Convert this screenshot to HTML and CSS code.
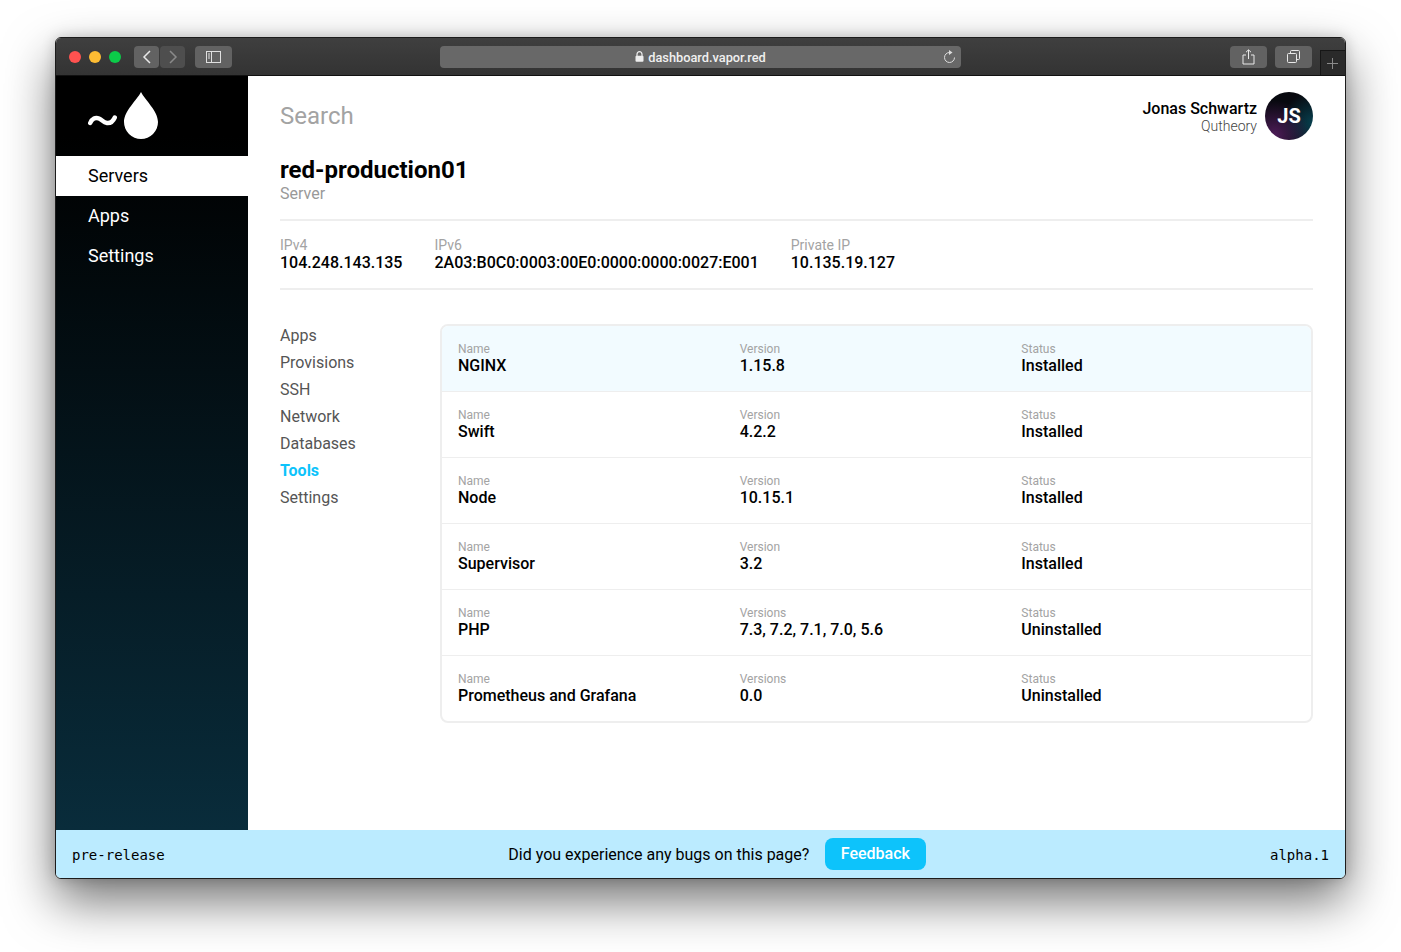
FILE: index.html
```html
<!DOCTYPE html>
<html lang="en">
<head>
    <meta charset="UTF-8">
    <title>dashboard.vapor.red</title>
    <link rel="stylesheet" href="styles.css">
</head>
<body>
    <div class="window">
        <div class="titlebar">
            <div class="lights">
                <span class="light red"></span>
                <span class="light yellow"></span>
                <span class="light green"></span>
            </div>
            <div class="nav-group">
                <div class="tb-btn nav-btn">
                    <svg width="10" height="14" viewBox="0 0 10 14"><path d="M8 1 L2 7 L8 13" fill="none" stroke="#e8e8e8" stroke-width="1.5"/></svg>
                </div>
                <div class="tb-btn nav-btn dim">
                    <svg width="10" height="14" viewBox="0 0 10 14"><path d="M2 1 L8 7 L2 13" fill="none" stroke="#8a8a8a" stroke-width="1.5"/></svg>
                </div>
            </div>
            <div class="tb-btn wide sidebar-btn">
                <svg width="16" height="12" viewBox="0 0 16 12"><rect x="0.5" y="0.5" width="14" height="11" fill="none" stroke="#e0e0e0"/><path d="M5.5 0.5 V11.5 M2 3 H4 M2 5 H4 M2 7 H4" fill="none" stroke="#e0e0e0"/></svg>
            </div>
            <div class="address">
                <svg class="lock" width="9" height="11" viewBox="0 0 9 11"><path d="M2 5 V3.2 a2.5 2.5 0 0 1 5 0 V5" fill="none" stroke="#eee" stroke-width="1.2"/><rect x="0.5" y="4.8" width="8" height="6" rx="1" fill="#eee"/></svg>
                <span class="address-text">dashboard.vapor.red</span>
                <svg class="reload" width="13" height="14" viewBox="0 0 13 14"><path d="M6.5 2.5 A5 5 0 1 0 11.5 7.5" fill="none" stroke="#ddd" stroke-width="1"/><path d="M6 0 L9.5 2.5 L6 5 Z" fill="#ddd"/></svg>
            </div>
            <div class="tb-right">
                <div class="tb-btn wide">
                    <svg width="13" height="16" viewBox="0 0 13 16"><path d="M4 6 H1 V15 H12 V6 H9 M6.5 10 V1 M4 3.2 L6.5 0.8 L9 3.2" fill="none" stroke="#e8e8e8"/></svg>
                </div>
                <div class="tb-btn wide">
                    <svg width="13" height="13" viewBox="0 0 13 13"><rect x="0.5" y="3.5" width="9" height="9" rx="1" fill="none" stroke="#e8e8e8"/><path d="M3.5 3.5 V1.5 a1 1 0 0 1 1 -1 H11.5 a1 1 0 0 1 1 1 V8.5 a1 1 0 0 1 -1 1 H9.5" fill="none" stroke="#e8e8e8"/></svg>
                </div>
                <div class="new-tab">
                    <svg width="11" height="11" viewBox="0 0 11 11"><path d="M5.5 0 V11 M0 5.5 H11" stroke="#8a8a8a"/></svg>
                </div>
            </div>
        </div>

        <div class="app">
            <aside class="sidebar">
                <div class="logo">
                    <svg width="72" height="48" viewBox="0 0 72 48">
                        <path d="M2.2 31 C4 26.5 7.5 25 11 26.5 C14.5 28 15 30.5 19 31 C22 31.3 25 29.5 26.8 25.5" fill="none" stroke="#fff" stroke-width="4.4" stroke-linecap="round"/>
                        <path d="M53 0 C57 8 70 19 70 30 A17 17 0 0 1 36 30 C36 19 49 8 53 0 Z" fill="#fff"/>
                    </svg>
                </div>
                <nav class="side-nav">
                    <a class="side-link active">Servers</a>
                    <a class="side-link">Apps</a>
                    <a class="side-link">Settings</a>
                </nav>
            </aside>

            <main class="content">
                <header class="topbar">
                    <div class="search">Search</div>
                    <div class="user">
                        <div class="user-text">
                            <div class="user-name">Jonas Schwartz</div>
                            <div class="user-org">Qutheory</div>
                        </div>
                        <div class="avatar">JS</div>
                    </div>
                </header>

                <h1 class="title">red-production01</h1>
                <div class="subtitle">Server</div>

                <div class="ips">
                    <div class="field">
                        <div class="label">IPv4</div>
                        <div class="value">104.248.143.135</div>
                    </div>
                    <div class="field">
                        <div class="label">IPv6</div>
                        <div class="value">2A03:B0C0:0003:00E0:0000:0000:0027:E001</div>
                    </div>
                    <div class="field">
                        <div class="label">Private IP</div>
                        <div class="value">10.135.19.127</div>
                    </div>
                </div>

                <div class="panel">
                    <nav class="sub-nav">
                        <a>Apps</a>
                        <a>Provisions</a>
                        <a>SSH</a>
                        <a>Network</a>
                        <a>Databases</a>
                        <a class="active">Tools</a>
                        <a>Settings</a>
                    </nav>
                    <div class="table">
                        <div class="row highlight">
                            <div><div class="cell-label">Name</div><div class="cell-value">NGINX</div></div>
                            <div><div class="cell-label">Version</div><div class="cell-value">1.15.8</div></div>
                            <div><div class="cell-label">Status</div><div class="cell-value">Installed</div></div>
                        </div>
                        <div class="row">
                            <div><div class="cell-label">Name</div><div class="cell-value">Swift</div></div>
                            <div><div class="cell-label">Version</div><div class="cell-value">4.2.2</div></div>
                            <div><div class="cell-label">Status</div><div class="cell-value">Installed</div></div>
                        </div>
                        <div class="row">
                            <div><div class="cell-label">Name</div><div class="cell-value">Node</div></div>
                            <div><div class="cell-label">Version</div><div class="cell-value">10.15.1</div></div>
                            <div><div class="cell-label">Status</div><div class="cell-value">Installed</div></div>
                        </div>
                        <div class="row">
                            <div><div class="cell-label">Name</div><div class="cell-value">Supervisor</div></div>
                            <div><div class="cell-label">Version</div><div class="cell-value">3.2</div></div>
                            <div><div class="cell-label">Status</div><div class="cell-value">Installed</div></div>
                        </div>
                        <div class="row">
                            <div><div class="cell-label">Name</div><div class="cell-value">PHP</div></div>
                            <div><div class="cell-label">Versions</div><div class="cell-value">7.3, 7.2, 7.1, 7.0, 5.6</div></div>
                            <div><div class="cell-label">Status</div><div class="cell-value">Uninstalled</div></div>
                        </div>
                        <div class="row">
                            <div><div class="cell-label">Name</div><div class="cell-value">Prometheus and Grafana</div></div>
                            <div><div class="cell-label">Versions</div><div class="cell-value">0.0</div></div>
                            <div><div class="cell-label">Status</div><div class="cell-value">Uninstalled</div></div>
                        </div>
                    </div>
                </div>
            </main>
        </div>

        <footer class="footer">
            <span class="mono">pre-release</span>
            <div class="footer-mid">
                <span>Did you experience any bugs on this page?</span>
                <button class="feedback">Feedback</button>
            </div>
            <span class="mono">alpha.1</span>
        </footer>
    </div>
</body>
</html>
```

FILE: styles.css
```css
html, body {
    margin: 0;
    height: 952px;
    overflow: hidden;
}
body {
    background-color: #ffffff;
    font-family: Roboto, Arial, sans-serif;
    color: #000;
    padding: 37px 55px 0;
    box-sizing: border-box;
}
a {
    display: block;
}

.window {
    width: 1291px;
    height: 842px;
    box-sizing: border-box;
    display: flex;
    flex-direction: column;
    border: 1px solid #1c1c1c;
    border-radius: 6px;
    overflow: hidden;
    background-color: #fff;
    box-shadow: 0 22px 50px rgba(0, 0, 0, 0.55), 0 0 14px rgba(0, 0, 0, 0.18);
}

/* browser chrome */
.titlebar {
    height: 38px;
    flex: none;
    display: flex;
    align-items: center;
    box-sizing: border-box;
    padding-left: 13px;
    background: linear-gradient(#3f3f3f, #333333);
    border-bottom: 1px solid #111;
    position: relative;
}
.lights {
    display: flex;
    gap: 8px;
    width: 65px;
}
.light {
    width: 12px;
    height: 12px;
    border-radius: 50%;
}
.red { background-color: #ff5250; }
.yellow { background-color: #fdbc33; }
.green { background-color: #0ccb49; }

.nav-group {
    display: flex;
    gap: 1px;
    margin-right: 10px;
}
.tb-btn {
    height: 22px;
    display: flex;
    align-items: center;
    justify-content: center;
    background-color: #626262;
    border-radius: 4px;
}
.nav-btn {
    width: 25px;
}
.nav-btn.dim {
    background-color: #4e4e4e;
}
.wide {
    width: 37px;
}
.sidebar-btn {
    margin-right: 208px;
}
.address {
    width: 521px;
    height: 22px;
    position: relative;
    display: flex;
    align-items: center;
    justify-content: center;
    gap: 4px;
    background-color: #686868;
    border-radius: 4px;
    color: #f0f0f0;
    font-size: 12.8px;
    font-weight: 500;
}
.address-text {
    margin-top: 1px;
}
.lock {
    flex: none;
}
.reload {
    position: absolute;
    right: 5px;
    top: 4px;
}
.tb-right {
    margin-left: auto;
    display: flex;
    align-items: center;
    gap: 8px;
    height: 100%;
}
.new-tab {
    width: 25px;
    height: 25px;
    box-sizing: border-box;
    align-self: flex-end;
    display: flex;
    align-items: center;
    justify-content: center;
    padding-right: 2px;
    background-color: #2a2a2a;
    border: 1px solid #161616;
    border-width: 1px 0 0 1px;
}

/* app layout */
.app {
    flex: 1;
    min-height: 0;
    display: flex;
}
.sidebar {
    width: 192px;
    flex: none;
    background: linear-gradient(#000000 8%, #092c3b 100%);
}
.logo {
    height: 80px;
    box-sizing: border-box;
    padding: 16px 0 0 32px;
}
.logo svg {
    display: block;
}
.side-link {
    height: 40px;
    line-height: 40px;
    padding-left: 32px;
    color: #fff;
    font-size: 18px;
}
.side-link.active {
    background-color: #fff;
    color: #000;
}

.content {
    flex: 1;
    min-width: 0;
    padding: 16px 32px 0;
}
.topbar {
    display: flex;
    justify-content: space-between;
    height: 48px;
}
.search {
    font-size: 24px;
    line-height: 48px;
    color: #a3a3a3;
}
.user {
    display: flex;
    align-items: center;
    gap: 8px;
    text-align: right;
}
.user-text {
    margin-top: 2px;
}
.user-name {
    font-size: 16px;
    line-height: 18px;
    font-weight: 500;
}
.user-org {
    font-size: 14px;
    line-height: 17px;
    font-weight: 300;
    color: #444;
}
.avatar {
    width: 48px;
    height: 48px;
    border-radius: 50%;
    display: flex;
    align-items: center;
    justify-content: center;
    color: #fff;
    font-size: 20px;
    font-weight: 700;
    background:
        radial-gradient(circle at 20% 90%, #4d1c58, transparent 60%),
        radial-gradient(circle at 100% 65%, #07404f, transparent 55%),
        #08090f;
}

.title {
    margin: 16px 0 0;
    font-size: 24px;
    line-height: 28px;
    font-weight: 700;
}
.subtitle {
    font-size: 16px;
    line-height: 20px;
    color: #999;
}

.ips {
    margin-top: 15px;
    height: 71px;
    box-sizing: border-box;
    display: flex;
    gap: 32px;
    padding-top: 16px;
    border-top: 2px solid #eeeeee;
    border-bottom: 2px solid #eeeeee;
}
.label {
    font-size: 14px;
    line-height: 16px;
    color: #a3a3a3;
}
.value {
    font-size: 16px;
    line-height: 19px;
    font-weight: 500;
}

.panel {
    margin-top: 34px;
    display: flex;
}
.sub-nav {
    width: 160px;
    flex: none;
    font-size: 16px;
    color: #555;
}
.sub-nav a {
    height: 27px;
    line-height: 24px;
}
.sub-nav a.active {
    color: #0dc3fb;
    font-weight: 700;
}

.table {
    flex: 1;
    border: 2px solid #eeeeee;
    border-radius: 8px;
    overflow: hidden;
}
.row {
    height: 66px;
    box-sizing: border-box;
    display: grid;
    grid-template-columns: repeat(3, 1fr);
    padding: 16px 8px 0 16px;
    border-top: 1px solid #eeeeee;
}
.row:first-child {
    border-top: none;
    height: 65px;
}
.highlight {
    background-color: #f2fbff;
}
.cell-label {
    font-size: 12px;
    line-height: 15px;
    color: #a3a3a3;
}
.cell-value {
    font-size: 16px;
    line-height: 18px;
    font-weight: 500;
}

.footer {
    height: 48px;
    flex: none;
    display: flex;
    align-items: center;
    justify-content: space-between;
    padding: 0 16px;
    background-color: #bbebff;
    font-size: 16px;
}
.mono {
    font-family: "DejaVu Sans Mono", monospace;
    font-size: 14px;
    margin-top: 2px;
}
.footer-mid {
    display: flex;
    align-items: center;
    gap: 16px;
}
.feedback {
    height: 32px;
    width: 101px;
    padding: 0 1px 2px 0;
    border: none;
    border-radius: 8px;
    background-color: #0dc3fb;
    color: #fff;
    font-family: inherit;
    font-size: 16px;
    font-weight: 500;
}
```
